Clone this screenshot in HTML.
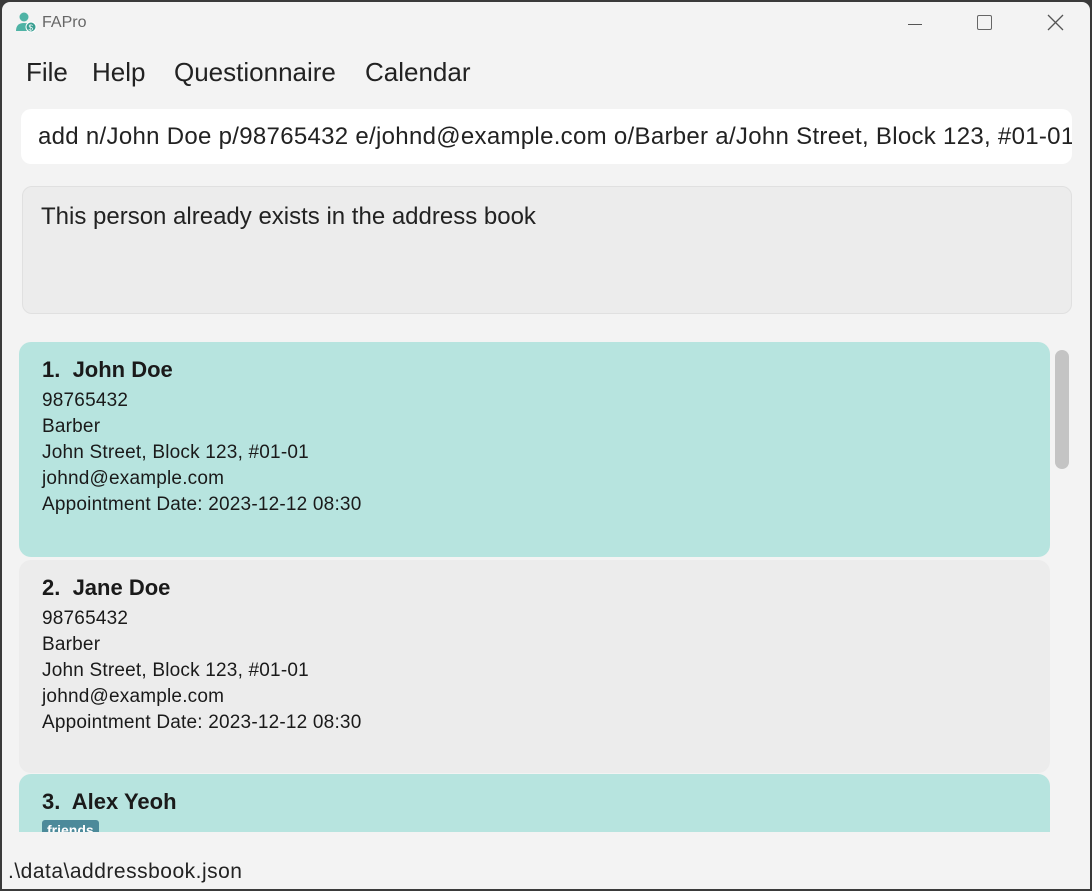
<!DOCTYPE html>
<html><head><style>
*{margin:0;padding:0;box-sizing:border-box}
body{width:1092px;height:891px;background:#3a3a3a;font-family:"Liberation Sans",sans-serif;position:relative;overflow:hidden}
.win{position:absolute;left:2px;top:2px;width:1088px;height:887px;background:#f3f3f3;border-radius:8px 8px 0 0;overflow:hidden}
.abs{position:absolute}
.menu{font-size:26px;color:#222;top:55px}
.card{position:absolute;left:17px;width:1031px;border-radius:12px;padding:15px 23px}
.card .n{font-size:22px;font-weight:bold;color:#1a1a1a;margin-bottom:5px}
.card .d{font-size:19px;color:#1a1a1a;line-height:26px;letter-spacing:0.2px}
</style></head><body>
<div class="win">
 <svg class="abs" style="left:13px;top:9px" width="22" height="22" viewBox="0 0 22 22"><circle cx="9" cy="6" r="4.5" fill="#4fb3a5"/><path d="M1 20 Q1 12 9 12 Q15 12 16 16 L16 20Z" fill="#4fb3a5"/><circle cx="16" cy="16" r="5" fill="#3a9f92" stroke="#fff" stroke-width="1"/><text x="13.5" y="19.5" font-size="8" fill="#fff" font-family="Liberation Sans">$</text></svg>
 <div class="abs" style="left:40px;top:12px;font-size:16px;color:#666">FAPro</div>
 <div class="abs" style="left:906px;top:22px;width:14px;height:1px;background:#555"></div>
 <div class="abs" style="left:975px;top:13px;width:15px;height:15px;border:1.5px solid #666;border-radius:2px"></div>
 <svg class="abs" style="left:1045px;top:12px" width="17" height="17"><path d="M1 1L16 16M16 1L1 16" stroke="#555" stroke-width="1.3"/></svg>
 <div class="abs menu" style="left:24px">File</div>
 <div class="abs menu" style="left:90px">Help</div>
 <div class="abs menu" style="left:172px">Questionnaire</div>
 <div class="abs menu" style="left:363px">Calendar</div>
 <div class="abs" style="left:19px;top:107px;width:1051px;height:55px;background:#fff;border-radius:10px;overflow:hidden;padding:14px 17px;font-size:24px;letter-spacing:0.3px;color:#222;white-space:nowrap">add n/John Doe p/98765432 e/johnd@example.com o/Barber a/John Street, Block 123, #01-01</div>
 <div class="abs" style="left:20px;top:184px;width:1050px;height:128px;background:#ececec;border:1px solid #e0e0e0;border-radius:10px;padding:16px 18px;font-size:24px;color:#222">This person already exists in the address book</div>
 <div class="abs" style="left:0;top:336px;width:1088px;height:494px;overflow:hidden">
  <div class="card" style="top:4px;height:215px;background:#b7e4df"><div class="n">1.&nbsp; John Doe</div><div class="d">98765432<br>Barber<br>John Street, Block 123, #01-01<br>johnd@example.com<br>Appointment Date: 2023-12-12 08:30</div></div>
  <div class="card" style="top:222px;height:213px;background:#ececec"><div class="n">2.&nbsp; Jane Doe</div><div class="d">98765432<br>Barber<br>John Street, Block 123, #01-01<br>johnd@example.com<br>Appointment Date: 2023-12-12 08:30</div></div>
  <div class="card" style="top:436px;height:100px;background:#b7e4df"><div class="n">3.&nbsp; Alex Yeoh</div><div style="display:inline-block;background:#4c8a9a;color:#fff;font-size:14px;font-weight:bold;padding:2px 5px;border-radius:3px">friends</div></div>
  <div class="abs" style="left:1053px;top:12px;width:14px;height:119px;background:#c4c4c4;border-radius:7px"></div>
 </div>
 <div class="abs" style="left:6px;top:858px;font-size:21px;letter-spacing:0.5px;color:#222">.\data\addressbook.json</div>
</div>
</body></html>
